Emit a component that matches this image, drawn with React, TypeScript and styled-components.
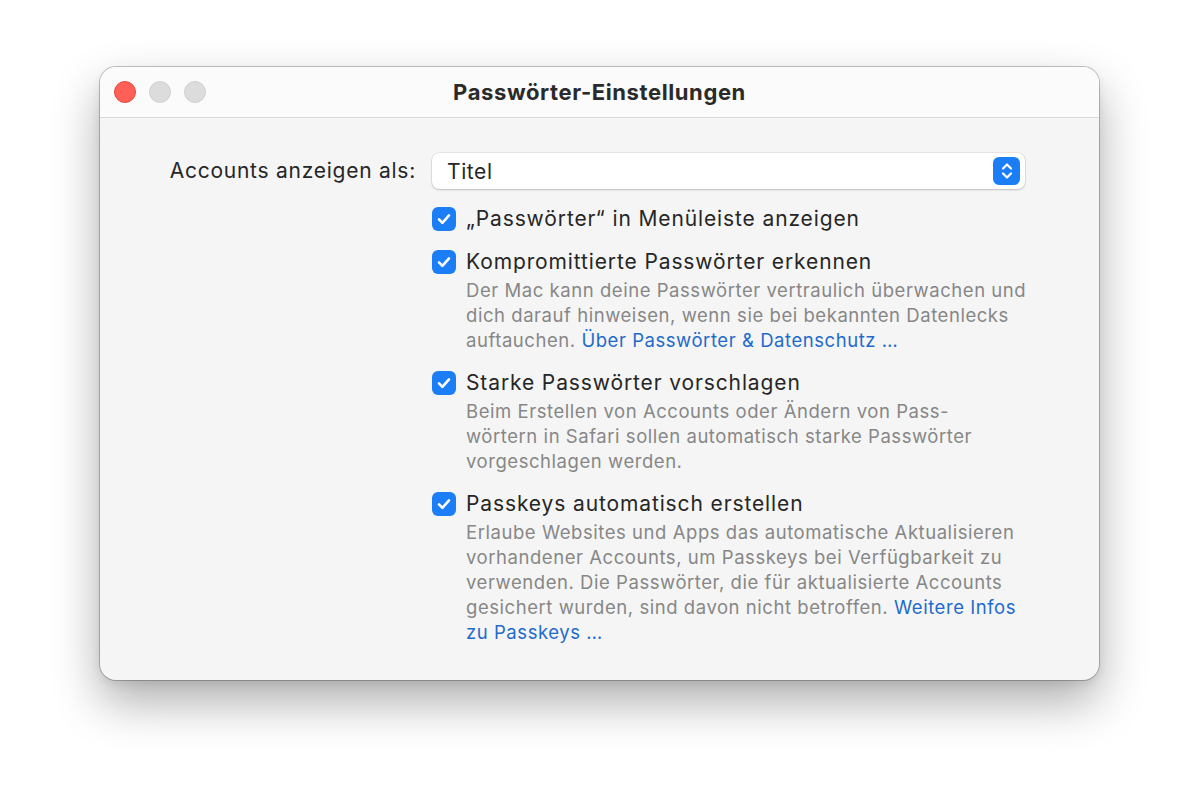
import React from "react"
import styled, { createGlobalStyle } from "styled-components"

const Global = createGlobalStyle`
html, body { margin: 0; padding: 0; background: #ffffff; }
body { font-family: Inter, "Noto Sans", "Liberation Sans", sans-serif; -webkit-font-smoothing: antialiased; }
`;

const Page = styled.div`
width: 1199px;
height: 812px;
padding: 67px 0 0 100px;
box-sizing: border-box;
`;

const Window = styled.div`
width: 999px;
height: 613px;
border-radius: 16px;
background: #f5f5f5;
box-shadow: 0 0 0 1px rgba(0,0,0,0.22), 0 22px 48px rgba(0,0,0,0.32), 0 4px 10px rgba(0,0,0,0.08);
overflow: hidden;
display: flex;
flex-direction: column;
`;

const TitleBar = styled.div`
height: 51px;
flex: none;
box-sizing: border-box;
background: #fbfbfb;
border-bottom: 1px solid #d9d9d9;
display: grid;
grid-template-columns: 120px 1fr 120px;
align-items: center;
`;

const Lights = styled.div`
display: flex;
gap: 13px;
padding-left: 14px;
`;

const Light = styled.span<{ $red?: boolean }>`
width: 22px;
height: 22px;
border-radius: 50%;
box-sizing: border-box;
background: ${p => (p.$red ? "#fe5f57" : "#dcdcdc")};
border: 1px solid ${p => (p.$red ? "#e2463f" : "#cfcfcf")};
`;

const Title = styled.div`
text-align: center;
font-size: 22px;
font-weight: 700;
color: #2a2a2a;
letter-spacing: 0.6px;
`;

const Body = styled.div`
display: grid;
grid-template-columns: 316px 593px;
column-gap: 16px;
row-gap: 17px;
padding-top: 35px;
`;

const FieldLabel = styled.div`
text-align: right;
font-size: 21px;
letter-spacing: 0.75px;
color: #262626;
line-height: 36px;
`;

const Select = styled.div`
height: 36px;
box-sizing: border-box;
background: #ffffff;
border-radius: 7px;
box-shadow: 0 0 0 0.5px rgba(0,0,0,0.12), 0 1px 2px rgba(0,0,0,0.18);
display: flex;
align-items: center;
justify-content: space-between;
padding: 0 5px 0 15px;
font-size: 21px;
letter-spacing: 0.6px;
color: #262626;
`;

const Stepper = styled.div`
width: 27px;
height: 28px;
border-radius: 6px;
background: #1b7ef6;
display: flex;
align-items: center;
justify-content: center;
`;

const Options = styled.div`
grid-column: 2;
display: flex;
flex-direction: column;
gap: 17px;
`;

const Option = styled.div`
display: grid;
grid-template-columns: 24px 1fr;
column-gap: 10px;
`;

const Box = styled.span`
width: 24px;
height: 24px;
margin-top: 1px;
border-radius: 6px;
background: #1b7ef6;
display: flex;
align-items: center;
justify-content: center;
`;

const OptionLabel = styled.div`
font-size: 21px;
letter-spacing: 0.88px;
line-height: 26px;
color: #262626;
white-space: nowrap;
`;

const Desc = styled.div`
grid-column: 2;
margin-top: 3px;
font-size: 18.5px;
letter-spacing: 0.55px;
line-height: 25px;
color: #878787;
white-space: nowrap;
`;

const Link = styled.span`
color: #1f6bcc;
`;

const Check = () => (
  <svg width="16" height="16" viewBox="0 0 16 16">
    <path d="M3 8.4 L6.4 11.8 L13 4.4" fill="none" stroke="#fff" strokeWidth="2.6" strokeLinecap="round" strokeLinejoin="round" />
  </svg>
)

const Chevrons = () => (
  <svg width="14" height="20" viewBox="0 0 14 20">
    <path d="M3 7.5 L7 3.5 L11 7.5 M3 12.5 L7 16.5 L11 12.5" fill="none" stroke="#fff" strokeWidth="2.2" strokeLinecap="round" strokeLinejoin="round" />
  </svg>
)

const options = [
  { label: "„Passwörter“ in Menüleiste anzeigen", lines: [] as React.ReactNode[] },
  {
    label: "Kompromittierte Passwörter erkennen",
    lines: [
      "Der Mac kann deine Passwörter vertraulich überwachen und",
      "dich darauf hinweisen, wenn sie bei bekannten Datenlecks",
      <>auftauchen. <Link>Über Passwörter &amp; Datenschutz …</Link></>,
    ],
  },
  {
    label: "Starke Passwörter vorschlagen",
    lines: [
      "Beim Erstellen von Accounts oder Ändern von Pass-",
      "wörtern in Safari sollen automatisch starke Passwörter",
      "vorgeschlagen werden.",
    ],
  },
  {
    label: "Passkeys automatisch erstellen",
    lines: [
      "Erlaube Websites und Apps das automatische Aktualisieren",
      "vorhandener Accounts, um Passkeys bei Verfügbarkeit zu",
      "verwenden. Die Passwörter, die für aktualisierte Accounts",
      <>gesichert wurden, sind davon nicht betroffen. <Link>Weitere Infos</Link></>,
      <Link>zu Passkeys …</Link>,
    ],
  },
]

const App = () => {
  return (
    <>
      <Global />
      <Page>
        <Window>
          <TitleBar>
            <Lights>
              <Light $red />
              <Light />
              <Light />
            </Lights>
            <Title>Passwörter-Einstellungen</Title>
            <div />
          </TitleBar>
          <Body>
            <FieldLabel>Accounts anzeigen als:</FieldLabel>
            <Select>
              <span>Titel</span>
              <Stepper><Chevrons /></Stepper>
            </Select>
            <Options>
              {options.map((o, i) => (
                <Option key={i}>
                  <Box><Check /></Box>
                  <OptionLabel>{o.label}</OptionLabel>
                  {o.lines.length > 0 && (
                    <Desc>
                      {o.lines.map((l, j) => (
                        <div key={j}>{l}</div>
                      ))}
                    </Desc>
                  )}
                </Option>
              ))}
            </Options>
          </Body>
        </Window>
      </Page>
    </>
  )
}

export default App
